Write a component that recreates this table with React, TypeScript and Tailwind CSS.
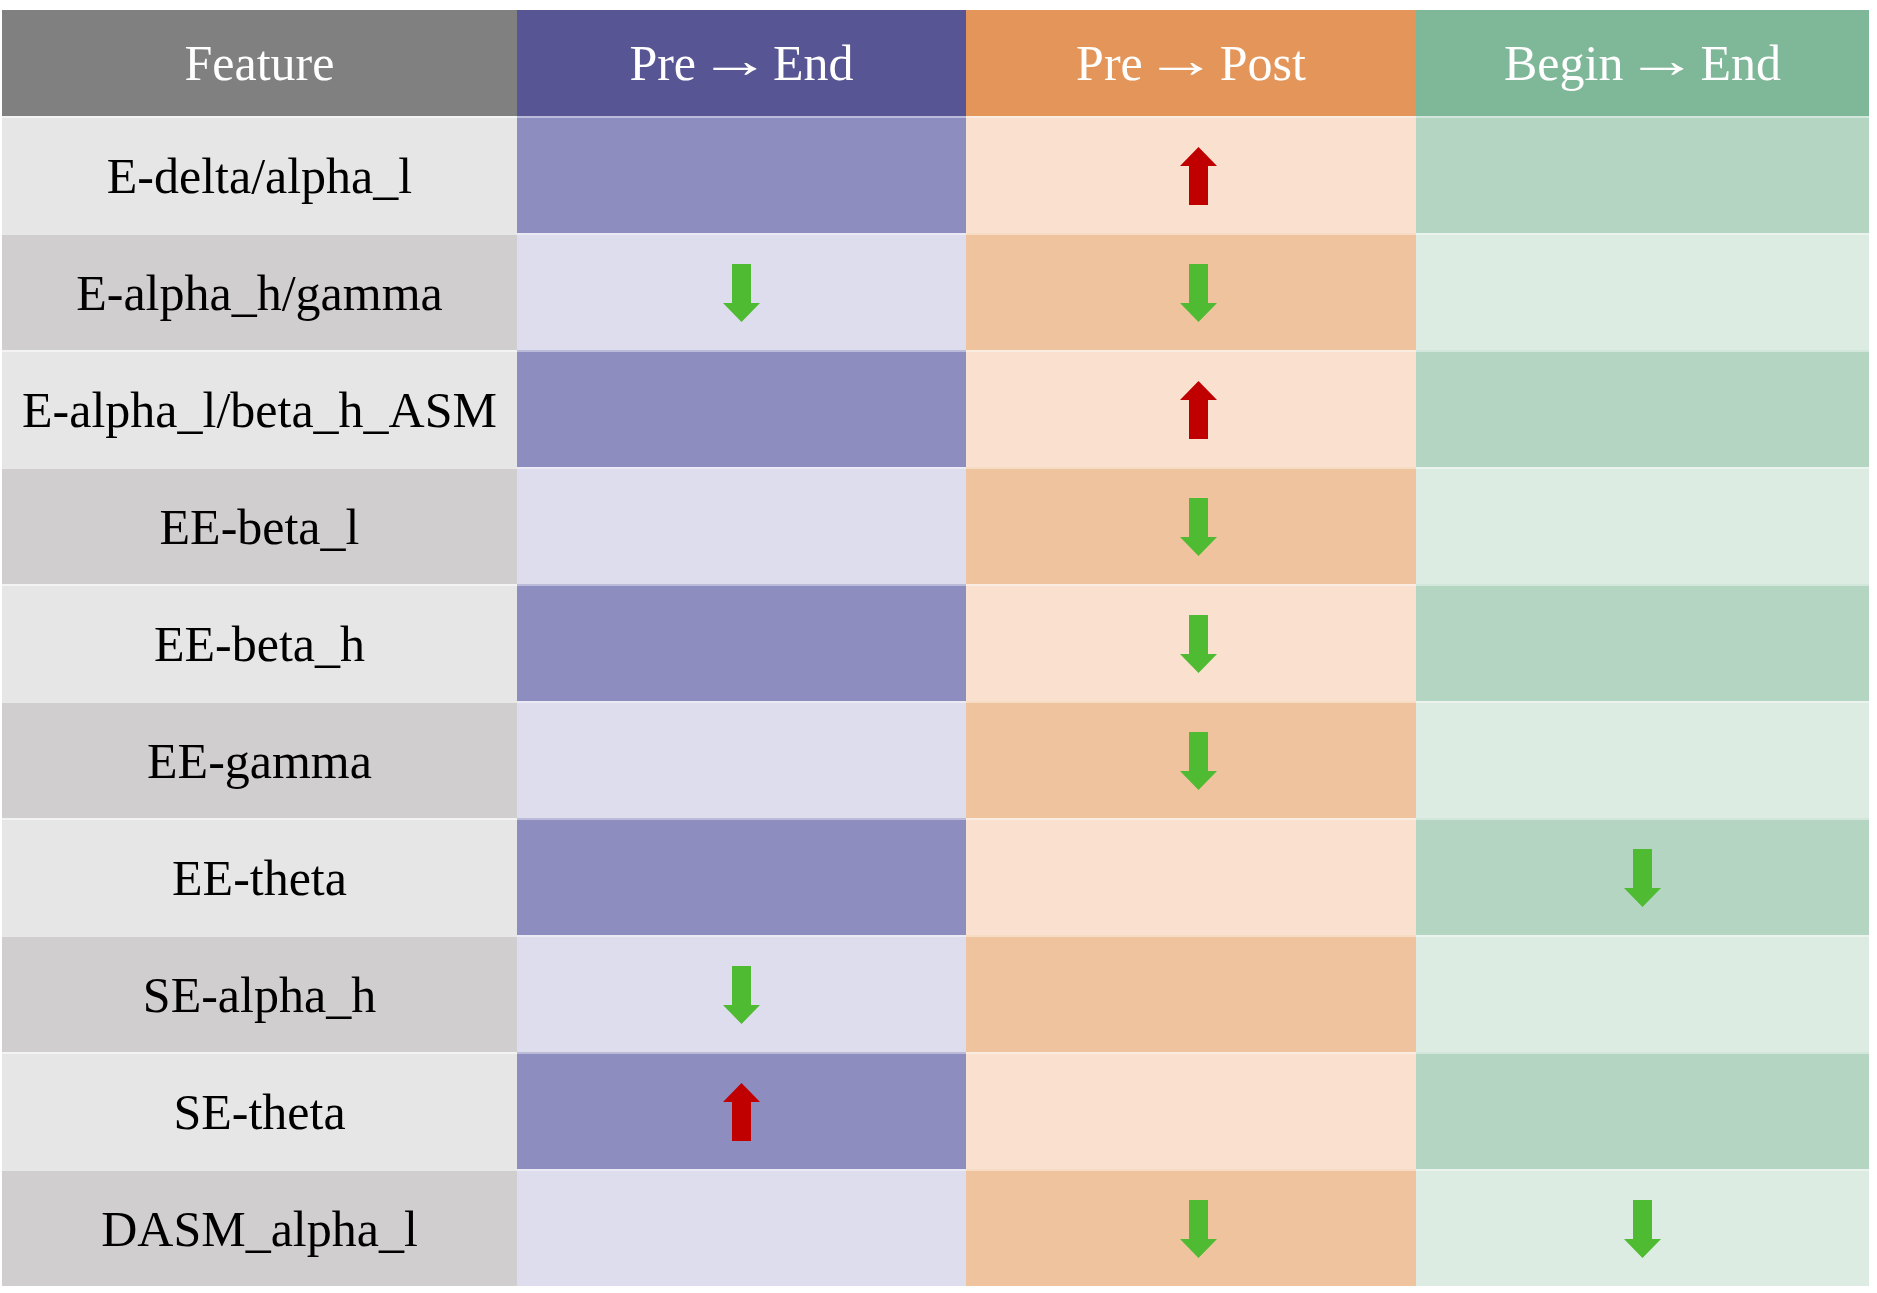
type Dir = "up" | "down" | null;

const rows: { name: string; a: Dir; b: Dir; c: Dir }[] = [
  { name: "E-delta/alpha_l", a: null, b: "up", c: null },
  { name: "E-alpha_h/gamma", a: "down", b: "down", c: null },
  { name: "E-alpha_l/beta_h_ASM", a: null, b: "up", c: null },
  { name: "EE-beta_l", a: null, b: "down", c: null },
  { name: "EE-beta_h", a: null, b: "down", c: null },
  { name: "EE-gamma", a: null, b: "down", c: null },
  { name: "EE-theta", a: null, b: null, c: "down" },
  { name: "SE-alpha_h", a: "down", b: null, c: null },
  { name: "SE-theta", a: "up", b: null, c: null },
  { name: "DASM_alpha_l", a: null, b: "down", c: "down" },
];

function Arrow({ dir }: { dir: Dir }) {
  if (!dir) return null;
  // shaft ~19px wide, head 37px wide, total 58px tall
  if (dir === "up") {
    return (
      <svg width="37" height="58" viewBox="0 0 37 58">
        <polygon points="18.5,0 37,19 28,19 28,58 9,58 9,19 0,19" fill="#c00000" />
      </svg>
    );
  }
  return (
    <svg width="37" height="58" viewBox="0 0 37 58">
      <polygon points="9,0 28,0 28,39 37,39 18.5,58 0,39 9,39" fill="#4fbb32" />
    </svg>
  );
}

function Head({ from, to, bg }: { from: string; to: string; bg: string }) {
  return (
    <div className={`flex h-[106px] items-center justify-center text-white ${bg}`}>
      <span className="whitespace-pre">
        {from}{" "}
        <span className="mx-[1px] inline-block -translate-y-[3px] scale-x-[1.45]">→</span>{" "}
        {to}
      </span>
    </div>
  );
}

function App() {
  return (
    <div className="min-h-screen bg-white pt-[10px] pl-[2px] font-['Liberation_Serif',serif] text-[50px] leading-none">
      <div className="grid w-[1867px] grid-cols-[515px_449px_450px_453px]">
        {/* header */}
        <div className="flex h-[106px] items-center justify-center bg-[#808080] text-white">Feature</div>
        <Head from="Pre" to="End" bg="bg-[#585595]" />
        <Head from="Pre" to="Post" bg="bg-[#e4965a]" />
        <Head from="Begin" to="End" bg="bg-[#7fb799]" />

        {rows.map((r, i) => {
          const odd = i % 2 === 0;
          return (
            <div key={r.name} className="contents">
              <div
                className={`flex h-[117px] items-center justify-center border-t-2 border-white/50 text-black ${
                  odd ? "bg-[#e7e6e6]" : "bg-[#d0cece]"
                }`}
              >
                {r.name}
              </div>
              <div
                className={`flex h-[117px] items-center justify-center border-t-2 border-white/40 ${
                  odd ? "bg-[#8e8dbf]" : "bg-[#dedded]"
                }`}
              >
                <Arrow dir={r.a} />
              </div>
              <div
                className={`flex h-[117px] items-center justify-center border-t-2 border-white/40 pl-[14px] ${
                  odd ? "bg-[#f9e0cf]" : "bg-[#f0c39f]"
                }`}
              >
                <Arrow dir={r.b} />
              </div>
              <div
                className={`flex h-[117px] items-center justify-center border-t-2 border-white/40 ${
                  odd ? "bg-[#b5d5c3]" : "bg-[#dcece3]"
                }`}
              >
                <Arrow dir={r.c} />
              </div>
            </div>
          );
        })}
      </div>
    </div>
  );
}

export default App;
